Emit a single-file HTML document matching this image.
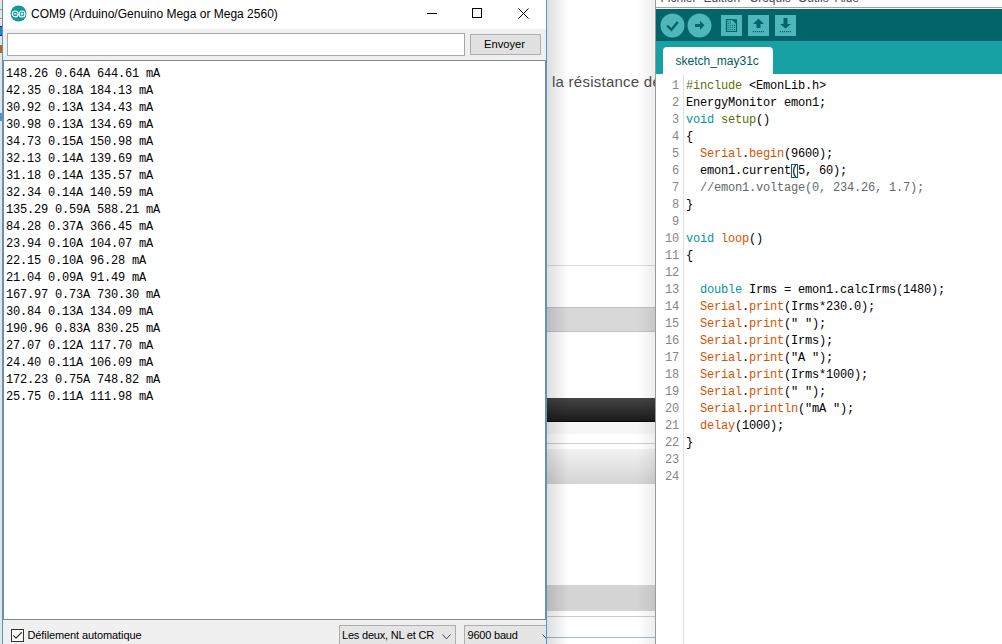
<!DOCTYPE html>
<html><head><meta charset="utf-8">
<style>
*{margin:0;padding:0;box-sizing:border-box}
html,body{width:1002px;height:644px;overflow:hidden;background:#fff;position:relative;font-family:"Liberation Sans",sans-serif}
.a{position:absolute}
/* serial monitor */
#sm{left:2px;top:0;width:545px;height:644px;overflow:hidden;background:#f0f0f0;border-left:1px solid #4a9ad6;border-right:1px solid #4a9ad6}
#title{left:0;top:0;width:543px;height:29px;background:#fff}
#out{left:0px;top:60px;width:543px;height:560px;background:#fff;border-top:1px solid #828790;border-bottom:1px solid #828790;border-left:1px solid #828790;border-right:1px solid #828790}
.ln{position:absolute;left:2px;font-family:"Liberation Mono",monospace;font-size:12px;letter-spacing:-0.2px;color:#000;white-space:pre;line-height:17px}
/* IDE */
#ide{left:655px;top:0;width:347px;height:644px;background:#fff;border-left:1px solid #9a9a9a}
.code{position:absolute;left:30px;font-family:"Liberation Mono",monospace;font-size:12px;letter-spacing:-0.2px;white-space:pre;line-height:17px;color:#000}
.num{position:absolute;width:23px;text-align:right;left:0;font-family:"Liberation Mono",monospace;font-size:12px;letter-spacing:-0.2px;color:#868686;line-height:17px}
.o{color:#d35400}.t{color:#00979c}.v{color:#5e6d03}.c{color:#5f6a6c}.s{color:#005c5f}
.cur{outline:1px solid #0a5b8c;outline-offset:-1px}
</style></head><body>
<div class="a" style="left:0;top:0;width:3px;height:644px;background:#e4e4e4"></div>
<div class="a" style="left:0;top:9px;width:2px;height:1px;background:#c98a4a"></div>
<div class="a" style="left:0;top:18px;width:2px;height:1px;background:#b08a8a"></div>
<div class="a" style="left:0;top:26px;width:2px;height:10px;background:#2f7fc4;border-top:1px solid #1a2a6a;border-bottom:1px solid #1a2a6a"></div>
<div class="a" style="left:0;top:45px;width:2px;height:8px;background:#b8651b"></div>
<div class="a" style="left:0;top:113px;width:2px;height:8px;background:#5a8fc4"></div>
<div class="a" style="left:547px;top:265px;width:108px;height:1px;background:#dcdcdc"></div>
<div class="a" style="left:547px;top:307px;width:108px;height:25px;background:#d8d8d8;border-top:1px solid #b9c4cc;border-bottom:1px solid #b9c4cc"></div>
<div class="a" style="left:547px;top:398px;width:108px;height:24px;background:linear-gradient(#444,#1b1b1b);border-bottom:1px solid #0a0a0a"></div>
<div class="a" style="left:547px;top:422px;width:108px;height:12px;background:#f6f6f6"></div>
<div class="a" style="left:547px;top:443px;width:108px;height:1px;background:#cfcfcf"></div>
<div class="a" style="left:547px;top:449px;width:108px;height:35px;background:linear-gradient(#f2f2f2,#d4d4d4)"></div>
<div class="a" style="left:547px;top:585px;width:108px;height:26px;background:#d4d4d4"></div>
<div class="a" style="left:547px;top:616px;width:108px;height:1px;background:#cdcdcd"></div>
<div class="a" style="left:547px;top:637px;width:108px;height:1px;background:#aab8c3"></div>
<div class="a" style="left:547px;top:0;width:22px;height:644px;background:linear-gradient(90deg,rgba(0,0,0,0.13),rgba(0,0,0,0))"></div>
<div class="a" style="left:637px;top:0;width:18px;height:644px;background:linear-gradient(90deg,rgba(0,0,0,0),rgba(0,0,0,0.07))"></div>
<div class="a" style="left:552px;top:72.5px;font-size:15px;letter-spacing:0.25px;color:#4a4a4a;white-space:nowrap">la résistance de</div>

<div id="sm" class="a">
  <div id="title" class="a">
    <svg class="a" style="left:7.4px;top:4.5px" width="17" height="17" viewBox="0 0 17 17">
      <circle cx="8.5" cy="8.5" r="8" fill="#0f989d"/>
      <circle cx="5.2" cy="8.9" r="2.9" fill="none" stroke="#fff" stroke-width="1.2"/>
      <circle cx="12.0" cy="8.9" r="2.9" fill="none" stroke="#fff" stroke-width="1.2"/>
      <path d="M3.9 8.9h2.6M10.7 8.9h2.6M12 7.6v2.6" stroke="#fff" stroke-width="1.1"/>
    </svg>
    <div class="a" style="left:28px;top:7px;font-size:12px;color:#000;white-space:nowrap">COM9 (Arduino/Genuino Mega or Mega 2560)</div>
    <div class="a" style="left:424px;top:13px;width:10px;height:1px;background:#000"></div>
    <div class="a" style="left:469px;top:8px;width:10px;height:10px;border:1px solid #000"></div>
    <svg class="a" style="left:515px;top:8px" width="11" height="11" viewBox="0 0 11 11"><path d="M0.5 0.5L10.5 10.5M10.5 0.5L0.5 10.5" stroke="#000" stroke-width="1"/></svg>
  </div>
  <div class="a" style="left:4px;top:33px;width:458px;height:23px;background:#fff;border:1px solid #a5a7ab"></div>
  <div class="a" style="left:467px;top:34px;width:71px;height:21px;background:#e1e1e1;border:1px solid #adadad;font-size:11.2px;text-align:center;line-height:19px;padding-right:2px">Envoyer</div>
  <div id="out" class="a">
<div class="ln" style="top:5px">148.26 0.64A 644.61 mA</div>
<div class="ln" style="top:22px">42.35 0.18A 184.13 mA</div>
<div class="ln" style="top:39px">30.92 0.13A 134.43 mA</div>
<div class="ln" style="top:56px">30.98 0.13A 134.69 mA</div>
<div class="ln" style="top:73px">34.73 0.15A 150.98 mA</div>
<div class="ln" style="top:90px">32.13 0.14A 139.69 mA</div>
<div class="ln" style="top:107px">31.18 0.14A 135.57 mA</div>
<div class="ln" style="top:124px">32.34 0.14A 140.59 mA</div>
<div class="ln" style="top:141px">135.29 0.59A 588.21 mA</div>
<div class="ln" style="top:158px">84.28 0.37A 366.45 mA</div>
<div class="ln" style="top:175px">23.94 0.10A 104.07 mA</div>
<div class="ln" style="top:192px">22.15 0.10A 96.28 mA</div>
<div class="ln" style="top:209px">21.04 0.09A 91.49 mA</div>
<div class="ln" style="top:226px">167.97 0.73A 730.30 mA</div>
<div class="ln" style="top:243px">30.84 0.13A 134.09 mA</div>
<div class="ln" style="top:260px">190.96 0.83A 830.25 mA</div>
<div class="ln" style="top:277px">27.07 0.12A 117.70 mA</div>
<div class="ln" style="top:294px">24.40 0.11A 106.09 mA</div>
<div class="ln" style="top:311px">172.23 0.75A 748.82 mA</div>
<div class="ln" style="top:328px">25.75 0.11A 111.98 mA</div>
  </div>
  <div class="a" style="left:8px;top:629px;width:13px;height:13px;border:1px solid #333;background:#fff"></div>
  <svg class="a" style="left:9px;top:630px" width="11" height="11" viewBox="0 0 11 11"><path d="M1.3 5.4L4 8.2L9.8 2.3" fill="none" stroke="#333" stroke-width="1.25"/></svg>
  <div class="a" style="left:24.5px;top:629px;font-size:11px;letter-spacing:-0.1px;white-space:nowrap">Défilement automatique</div>
  <div class="a" style="left:336px;top:625px;width:117px;height:21px;background:#e5e5e5;border:1px solid #adadad"></div>
  <div class="a" style="left:339px;top:629px;font-size:11px;letter-spacing:-0.2px;white-space:nowrap">Les deux, NL et CR</div>
  <svg class="a" style="left:439px;top:634px" width="9" height="6" viewBox="0 0 9 6"><path d="M0.5 0.5L4.5 4.8L8.5 0.5" fill="none" stroke="#444" stroke-width="1"/></svg>
  <div class="a" style="left:461px;top:625px;width:90px;height:21px;background:#e5e5e5;border:1px solid #adadad"></div>
  <svg class="a" style="left:539px;top:634px" width="9" height="6" viewBox="0 0 9 6"><path d="M0.5 0.5L4.5 4.8L8.5 0.5" fill="none" stroke="#444" stroke-width="1"/></svg>
  <div class="a" style="left:464.5px;top:629px;font-size:11px;letter-spacing:-0.2px;white-space:nowrap">9600 baud</div>
</div>

<div id="ide" class="a">
  <div class="a" style="left:0;top:0;width:346px;height:8px;background:#fff;overflow:hidden">
    <div class="a" style="left:0;top:-9px;font-size:12px;color:#4a4a4a;white-space:nowrap;width:346px;height:20px">
      <span class="a" style="left:4.5px">Fichier</span><span class="a" style="left:47.5px">Edition</span><span class="a" style="left:93.5px">Croquis</span><span class="a" style="left:142px">Outils</span><span class="a" style="left:179px">Aide</span></div>
  </div>
  <div class="a" style="left:0;top:7px;width:346px;height:1px;background:#a0a0a0"></div>
  <div class="a" style="left:0;top:9px;width:346px;height:32px;background:#006468"></div>
  <div class="a" style="left:0;top:41px;width:346px;height:33px;background:#17a1a5"></div>
  <svg class="a" style="left:0;top:9px" width="160" height="32" viewBox="656 9 160 32">
    <circle cx="672.5" cy="25.4" r="12" fill="#4db7bb"/>
    <circle cx="699.5" cy="25.4" r="12" fill="#4db7bb"/>
    <path d="M667.2 25.6L671.4 29.8L677.8 22" fill="none" stroke="#006468" stroke-width="2.4"/>
    <path d="M695 24h5v-3.3l4.4 4.6l-4.4 4.8v-3.2h-5z" fill="#006468"/>
    <rect x="721" y="15" width="21" height="21" fill="#4db7bb"/>
    <rect x="748" y="15" width="21" height="21" fill="#4db7bb"/>
    <rect x="775" y="15" width="21" height="21" fill="#4db7bb"/>
    <path d="M726.5 19.5h6l4 4v8h-10z" fill="none" stroke="#006468" stroke-width="1.2"/>
    <path d="M732 19.3l5 5v-5z" fill="#006468"/>
    <g fill="#006468">
      <rect x="727.6" y="20.6" width="1.1" height="1.1"/><rect x="729.7" y="20.6" width="1.1" height="1.1"/>
      <rect x="727.6" y="22.7" width="1.1" height="1.1"/><rect x="729.7" y="22.7" width="1.1" height="1.1"/>
      <rect x="727.6" y="24.8" width="1.1" height="1.1"/><rect x="729.7" y="24.8" width="1.1" height="1.1"/><rect x="731.8" y="24.8" width="1.1" height="1.1"/><rect x="733.9" y="24.8" width="1.1" height="1.1"/>
      <rect x="727.6" y="26.9" width="1.1" height="1.1"/><rect x="729.7" y="26.9" width="1.1" height="1.1"/><rect x="731.8" y="26.9" width="1.1" height="1.1"/><rect x="733.9" y="26.9" width="1.1" height="1.1"/>
      <rect x="727.6" y="29" width="1.1" height="1.1"/><rect x="729.7" y="29" width="1.1" height="1.1"/><rect x="731.8" y="29" width="1.1" height="1.1"/><rect x="733.9" y="29" width="1.1" height="1.1"/>
    </g>
    <path d="M753 24l5.5-5.5l5.5 5.5h-3.5v4h-4v-4z" fill="#006468"/>
    <path d="M780 24h3.5v-6h4v6h3.5l-5.5 4.5z" fill="#006468"/>
    <g fill="#006468">
      <rect x="752.8" y="31" width="1.2" height="1.2"/><rect x="754.8" y="31" width="1.2" height="1.2"/><rect x="756.8" y="31" width="1.2" height="1.2"/><rect x="758.8" y="31" width="1.2" height="1.2"/><rect x="760.8" y="31" width="1.2" height="1.2"/><rect x="762.8" y="31" width="1.2" height="1.2"/>
      <rect x="779.8" y="31" width="1.2" height="1.2"/><rect x="781.8" y="31" width="1.2" height="1.2"/><rect x="783.8" y="31" width="1.2" height="1.2"/><rect x="785.8" y="31" width="1.2" height="1.2"/><rect x="787.8" y="31" width="1.2" height="1.2"/><rect x="789.8" y="31" width="1.2" height="1.2"/>
    </g>
  </svg>
  <div class="a" style="left:7px;top:47px;width:110px;height:27px;background:#fff;border-radius:4px 4px 0 0"></div>
  <div class="a" style="left:19.5px;top:53.5px;font-size:12px;color:#005c5f;white-space:nowrap">sketch_may31c</div>
  <div class="a" style="left:27px;top:74px;width:1px;height:570px;background:#e0e0e0"></div>
<div class="num" style="top:78px">1</div>
<div class="num" style="top:95px">2</div>
<div class="num" style="top:112px">3</div>
<div class="num" style="top:129px">4</div>
<div class="num" style="top:146px">5</div>
<div class="num" style="top:163px">6</div>
<div class="num" style="top:180px">7</div>
<div class="num" style="top:197px">8</div>
<div class="num" style="top:214px">9</div>
<div class="num" style="top:231px">10</div>
<div class="num" style="top:248px">11</div>
<div class="num" style="top:265px">12</div>
<div class="num" style="top:282px">13</div>
<div class="num" style="top:299px">14</div>
<div class="num" style="top:316px">15</div>
<div class="num" style="top:333px">16</div>
<div class="num" style="top:350px">17</div>
<div class="num" style="top:367px">18</div>
<div class="num" style="top:384px">19</div>
<div class="num" style="top:401px">20</div>
<div class="num" style="top:418px">21</div>
<div class="num" style="top:435px">22</div>
<div class="num" style="top:452px">23</div>
<div class="num" style="top:469px">24</div>
<div class="code" style="top:78px"><span class="v">#include</span> &lt;EmonLib.h&gt;</div>
<div class="code" style="top:95px">EnergyMonitor emon1;</div>
<div class="code" style="top:112px"><span class="t">void</span> <span class="v">setup</span>()</div>
<div class="code" style="top:129px">{</div>
<div class="code" style="top:146px">  <span class="o">Serial</span>.<span class="o">begin</span>(9600);</div>
<div class="code" style="top:163px">  emon1.current<span class="cur">(</span>5, 60);</div>
<div class="code" style="top:180px">  <span class="c">//emon1.voltage(0, 234.26, 1.7);</span></div>
<div class="code" style="top:197px">}</div>
<div class="code" style="top:214px"></div>
<div class="code" style="top:231px"><span class="t">void</span> <span class="o">loop</span>()</div>
<div class="code" style="top:248px">{</div>
<div class="code" style="top:265px"></div>
<div class="code" style="top:282px">  <span class="t">double</span> Irms = emon1.calcIrms(1480);</div>
<div class="code" style="top:299px">  <span class="o">Serial</span>.<span class="o">print</span>(Irms*230.0);</div>
<div class="code" style="top:316px">  <span class="o">Serial</span>.<span class="o">print</span>(" ");</div>
<div class="code" style="top:333px">  <span class="o">Serial</span>.<span class="o">print</span>(Irms);</div>
<div class="code" style="top:350px">  <span class="o">Serial</span>.<span class="o">print</span>("A ");</div>
<div class="code" style="top:367px">  <span class="o">Serial</span>.<span class="o">print</span>(Irms*1000);</div>
<div class="code" style="top:384px">  <span class="o">Serial</span>.<span class="o">print</span>(" ");</div>
<div class="code" style="top:401px">  <span class="o">Serial</span>.<span class="o">println</span>("mA ");</div>
<div class="code" style="top:418px">  <span class="o">delay</span>(1000);</div>
<div class="code" style="top:435px">}</div>
<div class="code" style="top:452px"></div>
<div class="code" style="top:469px"></div>
</div>
</body></html>
